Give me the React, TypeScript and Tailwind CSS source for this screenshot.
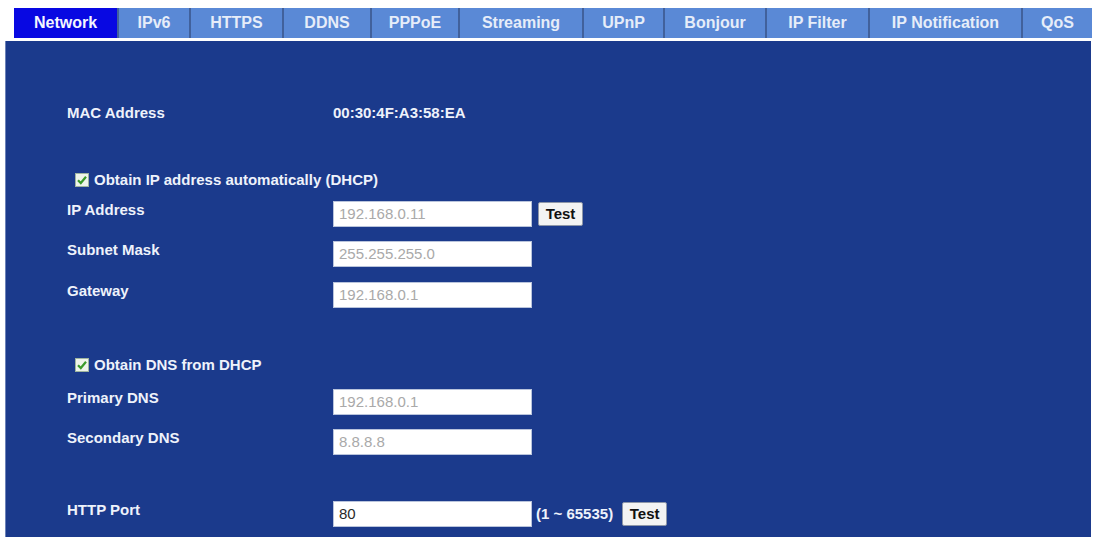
import React from 'react';

const tabs = [
  { label: 'Network', width: 'w-[103px]' },
  { label: 'IPv6', width: 'w-[72px]' },
  { label: 'HTTPS', width: 'w-[93px]' },
  { label: 'DDNS', width: 'w-[88px]' },
  { label: 'PPPoE', width: 'w-[88px]' },
  { label: 'Streaming', width: 'w-[124px]' },
  { label: 'UPnP', width: 'w-[81px]' },
  { label: 'Bonjour', width: 'w-[102px]' },
  { label: 'IP Filter', width: 'w-[103px]' },
  { label: 'IP Notification', width: 'w-[153px]' },
  { label: 'QoS', width: 'w-[71px]' },
];

const Checkbox: React.FC = () => (
  <span className="flex h-[14px] w-[14px] items-center justify-center border border-[#9fb59f] bg-[#eef4ea]">
    <svg viewBox="0 0 12 12" className="h-[12px] w-[12px]">
      <path d="M2 6.2 L4.8 9 L10 2.8" fill="none" stroke="#3a9a2a" strokeWidth="2.2" />
    </svg>
  </span>
);

const TextBox: React.FC<{ value: string; muted?: boolean }> = ({ value, muted = true }) => (
  <div
    className={`flex h-[26px] w-[199px] items-center border border-[#b9c4dc] bg-white px-[5px] text-[15px] font-normal ${
      muted ? 'text-[#a9a9a9]' : 'text-[#2a2a2a]'
    }`}
  >
    {value}
  </div>
);

const TestButton: React.FC = () => (
  <button className="flex h-[24px] w-[45px] items-center justify-center rounded-[2px] border border-[#8d96a8] bg-[#f3f3f3] text-[15px] font-bold text-[#111]">
    Test
  </button>
);

// label column is 327px wide so values line up at x=333
const FieldRow: React.FC<{ label: string; className?: string; children: React.ReactNode }> = ({
  label,
  className = '',
  children,
}) => (
  <div className={`flex items-start ${className}`}>
    <div className="w-[327px] shrink-0 pl-[61px] leading-[18px]">{label}</div>
    <div className="flex items-center">{children}</div>
  </div>
);

const App: React.FC = () => {
  return (
    <div
      className="flex h-[543px] w-[1095px] flex-col bg-white pt-[8px]"
      style={{ fontFamily: '"Liberation Sans", Arial, sans-serif' }}
    >
      {/* tab strip */}
      <div className="ml-[14px] flex h-[30px]">
        {tabs.map((tab, i) => (
          <div
            key={tab.label}
            className={`flex h-full items-center justify-center text-[16px] font-bold ${tab.width} ${
              i === 0
                ? 'bg-[#0808e2] text-[#f4f6ff]'
                : 'border-l-2 border-[#41619c] bg-[#5a89d6] text-[#e6edf9]'
            }`}
          >
            {tab.label}
          </div>
        ))}
      </div>

      {/* settings panel */}
      <div className="ml-[5px] mt-[3px] flex h-[496px] w-[1086px] flex-col border-l border-[#6c82b8] bg-[#1b3a8c] pt-[62px] text-[15px] font-bold text-[#eef2fb]">
        <div className="flex h-[20px] items-center">
          <div className="w-[327px] shrink-0 pl-[61px]">MAC Address</div>
          <div>00:30:4F:A3:58:EA</div>
        </div>

        <div className="mt-[47px] flex h-[20px] items-center pl-[69px]">
          <Checkbox />
          <span className="ml-[5px]">Obtain IP address automatically (DHCP)</span>
        </div>

        <FieldRow label="IP Address" className="mt-[11px]">
          <TextBox value="192.168.0.11" />
          <div className="ml-[6px]">
            <TestButton />
          </div>
        </FieldRow>
        <FieldRow label="Subnet Mask" className="mt-[14px]">
          <TextBox value="255.255.255.0" />
        </FieldRow>
        <FieldRow label="Gateway" className="mt-[15px]">
          <TextBox value="192.168.0.1" />
        </FieldRow>

        <div className="mt-[47px] flex h-[20px] items-center pl-[69px]">
          <Checkbox />
          <span className="ml-[5px]">Obtain DNS from DHCP</span>
        </div>

        <FieldRow label="Primary DNS" className="mt-[14px]">
          <TextBox value="192.168.0.1" />
        </FieldRow>
        <FieldRow label="Secondary DNS" className="mt-[14px]">
          <TextBox value="8.8.8.8" />
        </FieldRow>

        <FieldRow label="HTTP Port" className="mt-[46px]">
          <TextBox value="80" muted={false} />
          <span className="ml-[4px]">(1 ~ 65535)</span>
          <div className="ml-[9px]">
            <TestButton />
          </div>
        </FieldRow>
      </div>
    </div>
  );
};

export default App;
